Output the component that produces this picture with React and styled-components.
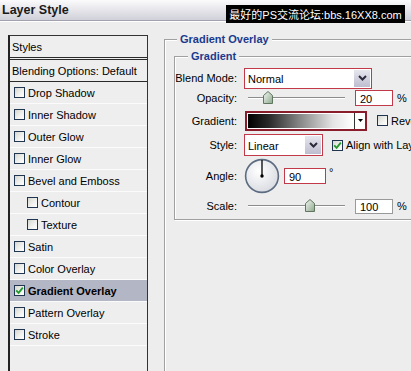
import React from "react";
import styled, { createGlobalStyle } from "styled-components";

const Global = createGlobalStyle`
  html, body { margin: 0; padding: 0; background: #ededed; }
  body { font-family: "Liberation Sans", Arial, sans-serif; font-size: 11px; color: #000; }
`;

const Window = styled.div`
  position: relative;
  width: 411px;
  height: 371px;
  overflow: hidden;
  background: #ededed;
  display: flex;
  flex-direction: column;
`;

const TitleBar = styled.div`
  flex: none;
  height: 20px;
  padding-left: 2px;
  display: flex;
  align-items: center;
  background: linear-gradient(#fbfbfc, #d0d0d9);
  border-bottom: 1px solid #a2a2ae;
  box-shadow: 0 1px 0 #ffffff;
`;

const Title = styled.div`
  font-weight: bold;
  font-size: 12.5px;
  color: #1a1a1a;
`;

const Watermark = styled.div`
  position: absolute;
  left: 226px;
  top: 5px;
  width: 179px;
  height: 18px;
  background: #000;
  color: #fff;
  font-family: "Liberation Sans", "Noto Sans CJK SC", sans-serif;
  font-size: 11px;
  white-space: nowrap;
  display: flex;
  align-items: center;
  justify-content: center;
`;

const Body = styled.div`
  flex: 1;
  min-height: 0;
  display: flex;
  padding: 14px 0 0 8px;
`;

const StylePanel = styled.div`
  flex: none;
  width: 137px;
  height: 345px;
  border-left: 2px solid #222;
  border-right: 1px solid #333;
  border-top: 1px solid #333;
  background: #eeeeee;
`;

const HeadRow = styled.div`
  height: 21px;
  padding-left: 2px;
  display: flex;
  align-items: center;
  border-bottom: ${(p) => (p.$double ? "3px double #2a2a2a" : "1px solid #2a2a2a")};
`;

const Item = styled.div`
  height: 21px;
  border-bottom: 1px solid #fbfbfb;
  display: flex;
  align-items: center;
  gap: 3px;
  padding-left: ${(p) => (p.$indent ? 17 : 4)}px;
  background: ${(p) => (p.$active ? "#b3b7c5" : "transparent")};
  font-weight: ${(p) => (p.$active ? "bold" : "normal")};
  white-space: nowrap;
`;

const Box = styled.span`
  flex: none;
  box-sizing: border-box;
  width: 11px;
  height: 11px;
  border: 1px solid #1f3550;
  background: linear-gradient(135deg, #d6d6d0 0%, #f2f2f0 60%, #ffffff 100%);
  display: flex;
  align-items: center;
  justify-content: center;
`;

const Right = styled.div`
  flex: 1;
  min-width: 0;
  margin: -3px 0 0 16px;
`;

const Group = styled.fieldset`
  margin: 0;
  box-sizing: border-box;
  width: ${(p) => p.$w}px;
  height: ${(p) => (p.$h ? `${p.$h}px` : "auto")};
  padding: ${(p) => p.$pad};
  border: 1px solid #a0a0a0;
  box-shadow: inset 1px 1px 0 #ffffff, 1px 1px 0 #ffffff;
`;

const Legend = styled.legend`
  margin-left: ${(p) => p.$m}px;
  padding: 0 3px;
  background: #ededed;
  color: #1b3a8e;
  font-weight: bold;
  font-size: 11px;
  line-height: 14px;
`;

const Row = styled.div`
  height: ${(p) => p.$h}px;
  display: grid;
  grid-template-columns: 62px auto;
  column-gap: 7px;
  align-items: center;
`;

const Label = styled.span`
  text-align: right;
  white-space: nowrap;
`;

const Controls = styled.div`
  display: flex;
  align-items: center;
  white-space: nowrap;
`;

const Select = styled.div`
  box-sizing: border-box;
  width: ${(p) => p.$w}px;
  height: ${(p) => p.$h}px;
  border: 1px solid #c23a4a;
  background: #fff;
  display: flex;
`;

const SelectText = styled.span`
  flex: 1;
  padding-left: 3px;
  display: flex;
  align-items: center;
  padding-top: 1px;
`;

const SelectButton = styled.span`
  width: 16px;
  margin: 1px;
  background: linear-gradient(#e6e6ee, #bdbdd0);
  display: flex;
  align-items: center;
  justify-content: center;
`;

const Field = styled.div`
  box-sizing: border-box;
  width: ${(p) => p.$w}px;
  height: ${(p) => p.$h}px;
  margin-left: ${(p) => p.$ml}px;
  border: 1px solid ${(p) => (p.$red ? "#c23a4a" : "#9a9a9a")};
  background: #fff;
  padding: 1px 0 0 4px;
  display: flex;
  align-items: center;
`;

const Unit = styled.span`
  margin-left: ${(p) => p.$ml}px;
  align-self: ${(p) => (p.$sup ? "flex-start" : "center")};
  margin-top: ${(p) => (p.$sup ? "8px" : "0")};
`;

const GradBar = styled.div`
  box-sizing: border-box;
  margin-left: 1px;
  width: 122px;
  height: 20px;
  border: 2px solid #8b1c2c;
  background: #fff;
  display: flex;
`;

const GradFill = styled.div`
  flex: 1;
  margin: 1px 0 1px 1px;
  background: linear-gradient(to right, #000 0%, #2a2a2a 20%, #8a8a8a 50%, #e4e4e4 80%, #fff 100%);
`;

const GradArrow = styled.div`
  width: 10px;
  border-left: 1px solid #333;
  display: flex;
  align-items: center;
  justify-content: center;
`;

const CheckLabel = styled.span`
  margin-left: ${(p) => p.$ml}px;
  display: flex;
  align-items: center;
  gap: 3px;
`;

const Tick = () => (
  <svg width="9" height="9" viewBox="0 0 9 9">
    <path d="M1.2 4.4 L3.6 6.8 L7.8 1.6" fill="none" stroke="#1f9a2a" strokeWidth="1.8" />
  </svg>
);

const Chevron = () => (
  <svg width="9" height="6" viewBox="0 0 9 6">
    <path d="M1 1 L4.5 4.5 L8 1" fill="none" stroke="#2a2a3a" strokeWidth="2" />
  </svg>
);

function Slider({ pos, id }) {
  return (
    <svg width="108" height="14" viewBox="0 0 108 14">
      <defs>
        <linearGradient id={id} x1="0" y1="0" x2="1" y2="1">
          <stop offset="0" stopColor="#f4f8f2" />
          <stop offset="1" stopColor="#8ea88e" />
        </linearGradient>
      </defs>
      <line x1="4" y1="6.5" x2="101" y2="6.5" stroke="#8c8c8c" />
      <line x1="4" y1="7.5" x2="101" y2="7.5" stroke="#ffffff" />
      <path
        d={`M${pos - 4.5} 4.5 L${pos} 0.5 L${pos + 4.5} 4.5 L${pos + 4.5} 12.5 L${pos - 4.5} 12.5 Z`}
        fill={`url(#${id})`}
        stroke="#60765f"
      />
    </svg>
  );
}

const Dial = () => (
  <svg width="36" height="36" viewBox="0 0 36 36">
    <defs>
      <radialGradient id="dialFill" cx="40%" cy="35%" r="70%">
        <stop offset="0" stopColor="#ffffff" />
        <stop offset="1" stopColor="#d8dae0" />
      </radialGradient>
    </defs>
    <circle cx="18" cy="18" r="16.4" fill="url(#dialFill)" stroke="#5b6b80" strokeWidth="1.6" />
    <line x1="18" y1="18" x2="18" y2="2" stroke="#000" strokeWidth="1.3" />
    <circle cx="18" cy="18" r="1.7" fill="#000" />
  </svg>
);

const items = [
  { t: "Drop Shadow" },
  { t: "Inner Shadow" },
  { t: "Outer Glow" },
  { t: "Inner Glow" },
  { t: "Bevel and Emboss" },
  { t: "Contour", indent: true },
  { t: "Texture", indent: true },
  { t: "Satin" },
  { t: "Color Overlay" },
  { t: "Gradient Overlay", active: true },
  { t: "Pattern Overlay" },
  { t: "Stroke" },
];

export default function App() {
  return (
    <>
      <Global />
      <Window>
        <TitleBar>
          <Title>Layer Style</Title>
        </TitleBar>
        <Watermark>最好的PS交流论坛:bbs.16XX8.com</Watermark>
        <Body>
          <StylePanel>
            <HeadRow $double>Styles</HeadRow>
            <HeadRow>Blending Options: Default</HeadRow>
            {items.map((it) => (
              <Item key={it.t} $indent={it.indent} $active={it.active}>
                <Box>{it.active && <Tick />}</Box>
                <span>{it.t}</span>
              </Item>
            ))}
          </StylePanel>
          <Right>
            <Group $w={280} $h={360} $pad="3px 0 0 9px">
              <Legend $m={3}>Gradient Overlay</Legend>
              <Group $w={260} $pad="4px 0 3px 0">
                <Legend $m={13}>Gradient</Legend>
                <Row $h={22}>
                  <Label>Blend Mode:</Label>
                  <Controls>
                    <Select $w={128} $h={21}>
                      <SelectText>Normal</SelectText>
                      <SelectButton>
                        <Chevron />
                      </SelectButton>
                    </Select>
                  </Controls>
                </Row>
                <Row $h={18}>
                  <Label>Opacity:</Label>
                  <Controls>
                    <Slider pos={24} id="thumbA" />
                    <Field $w={38} $h={16} $ml={3} $red>20</Field>
                    <Unit $ml={4}>%</Unit>
                  </Controls>
                </Row>
                <Row $h={27}>
                  <Label>Gradient:</Label>
                  <Controls>
                    <GradBar>
                      <GradFill />
                      <GradArrow>
                        <svg width="5" height="3" viewBox="0 0 5 3">
                          <path d="M0 0 L5 0 L2.5 3 Z" fill="#000" />
                        </svg>
                      </GradArrow>
                    </GradBar>
                    <CheckLabel $ml={10}>
                      <Box />
                      <span>Reverse</span>
                    </CheckLabel>
                  </Controls>
                </Row>
                <Row $h={22}>
                  <Label>Style:</Label>
                  <Controls>
                    <Select $w={79} $h={22}>
                      <SelectText>Linear</SelectText>
                      <SelectButton>
                        <Chevron />
                      </SelectButton>
                    </Select>
                    <CheckLabel $ml={9}>
                      <Box>
                        <Tick />
                      </Box>
                      <span>Align with Layer</span>
                    </CheckLabel>
                  </Controls>
                </Row>
                <Row $h={40}>
                  <Label>Angle:</Label>
                  <Controls>
                    <Dial />
                    <Field $w={42} $h={16} $ml={4} $red>90</Field>
                    <Unit $ml={3} $sup>°</Unit>
                  </Controls>
                </Row>
                <Row $h={20}>
                  <Label>Scale:</Label>
                  <Controls>
                    <Slider pos={66} id="thumbB" />
                    <Field $w={38} $h={15} $ml={3}>100</Field>
                    <Unit $ml={4}>%</Unit>
                  </Controls>
                </Row>
              </Group>
            </Group>
          </Right>
        </Body>
      </Window>
    </>
  );
}
